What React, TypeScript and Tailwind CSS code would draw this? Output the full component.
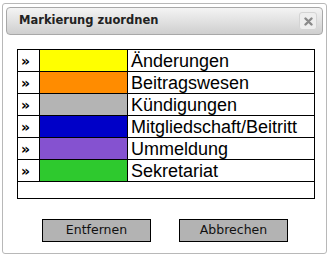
import React from 'react';

const rows = [
  { label: 'Änderungen', color: 'bg-[#ffff00]' },
  { label: 'Beitragswesen', color: 'bg-[#ff8c00]' },
  { label: 'Kündigungen', color: 'bg-[#b4b4b4]' },
  { label: 'Mitgliedschaft/Beitritt', color: 'bg-[#0000c8]' },
  { label: 'Ummeldung', color: 'bg-[#8552d0]' },
  { label: 'Sekretariat', color: 'bg-[#2ec92e]' },
];

export default function App() {
  return (
    <div className="w-[329px] h-[256px] bg-white pt-[3px] pl-[2px]">
      <div className="w-[325px] h-[251px] border border-[#b8b8b8] rounded-[3px] bg-white p-[3px] flex flex-col">
        {/* title bar */}
        <div className="h-[28px] shrink-0 rounded-[4px] border border-[#a8a8a8] bg-gradient-to-b from-[#f4f4f4] to-[#cfcfcf] flex items-center justify-between pl-[12px] pr-[5px]">
          <span className="font-['DejaVu_Sans',sans-serif] font-bold text-[11.5px] text-[#222]">Markierung zuordnen</span>
          <div className="w-[18px] h-[18px] rounded-[3px] border border-[#d4d4d4] bg-[#eeeeee] flex items-center justify-center">
            <svg width="9" height="9" viewBox="0 0 9 9">
              <path d="M1.5 1.5 L7.5 7.5 M7.5 1.5 L1.5 7.5" stroke="#8a8a8a" strokeWidth="2.4" strokeLinecap="round" />
            </svg>
          </div>
        </div>

        {/* table */}
        <div className="pl-[11px] pt-[14px]">
          <table className="border-collapse w-[298px] font-['Liberation_Sans',Arial,sans-serif] text-[18px] leading-none text-black">
            <tbody>
              {rows.map((r) => (
                <tr key={r.label} className="h-[22px]">
                  <td className="w-[22px] border border-black pl-[3px] font-['DejaVu_Sans',sans-serif] font-bold text-[14px]">»</td>
                  <td className={`w-[88px] border border-black ${r.color}`}></td>
                  <td className="border border-black pl-[3px]">{r.label}</td>
                </tr>
              ))}
              <tr className="h-[17px]">
                <td colSpan={3} className="border border-black"></td>
              </tr>
            </tbody>
          </table>
        </div>

        {/* buttons */}
        <div className="flex pl-[36px] gap-[28px] mt-[20px]">
          <button className="w-[109px] h-[23px] bg-[#b3b3b3] border border-black font-['DejaVu_Sans',sans-serif] text-[12.5px] text-[#111]">Entfernen</button>
          <button className="w-[109px] h-[23px] bg-[#b3b3b3] border border-black font-['DejaVu_Sans',sans-serif] text-[12.5px] text-[#111]">Abbrechen</button>
        </div>
      </div>
    </div>
  );
}
